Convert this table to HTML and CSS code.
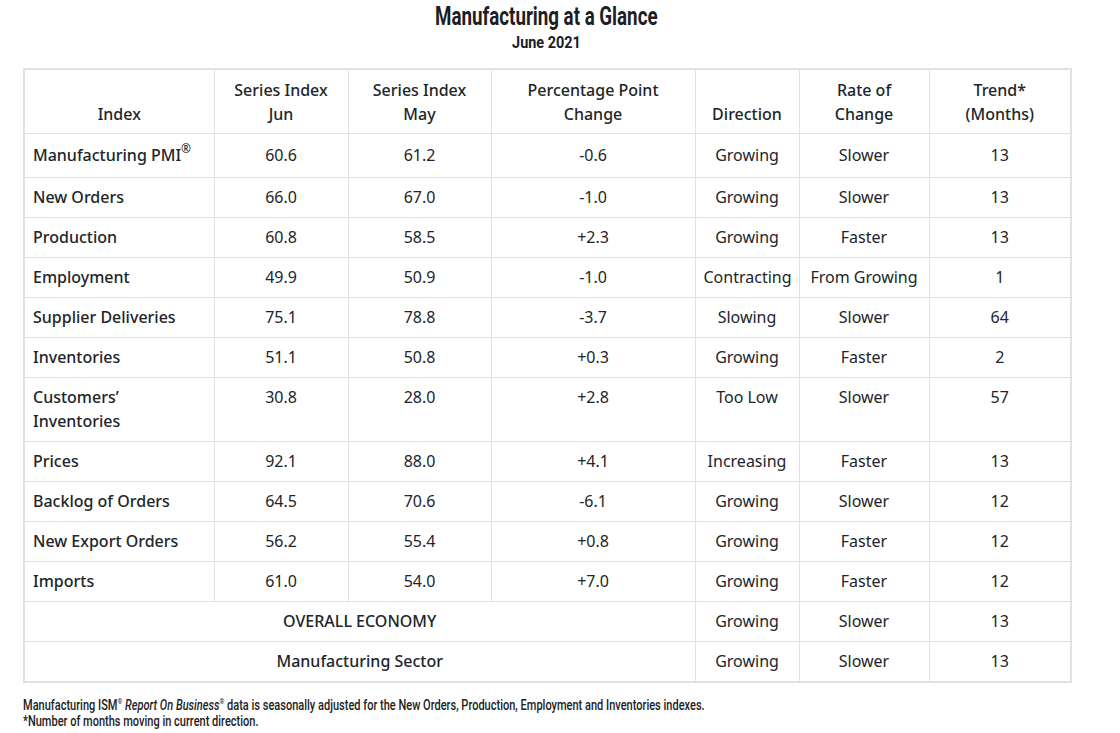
FILE: index.html
```html
<!DOCTYPE html>
<html lang="en">
<head>
<meta charset="utf-8">
<title>Manufacturing at a Glance</title>
<link rel="stylesheet" href="styles.css">
</head>
<body>
<div class="wrap">
  <header class="head">
    <h1 class="title"><span class="cond">Manufacturing at a Glance</span></h1>
    <h2 class="subtitle"><span class="cond">June 2021</span></h2>
  </header>
  <table class="glance">
    <colgroup>
      <col class="c1"><col class="c2"><col class="c3"><col class="c4"><col class="c5"><col class="c6"><col class="c7">
    </colgroup>
    <thead>
      <tr>
        <th>Index</th>
        <th>Series Index<br>Jun</th>
        <th>Series Index<br>May</th>
        <th>Percentage Point<br>Change</th>
        <th>Direction</th>
        <th>Rate of<br>Change</th>
        <th>Trend*<br>(Months)</th>
      </tr>
    </thead>
    <tbody>
      <tr class="tall"><td class="lbl">Manufacturing PMI<sup>®</sup></td><td>60.6</td><td>61.2</td><td>-0.6</td><td>Growing</td><td>Slower</td><td>13</td></tr>
      <tr><td class="lbl">New Orders</td><td>66.0</td><td>67.0</td><td>-1.0</td><td>Growing</td><td>Slower</td><td>13</td></tr>
      <tr><td class="lbl">Production</td><td>60.8</td><td>58.5</td><td>+2.3</td><td>Growing</td><td>Faster</td><td>13</td></tr>
      <tr><td class="lbl">Employment</td><td>49.9</td><td>50.9</td><td>-1.0</td><td>Contracting</td><td>From Growing</td><td>1</td></tr>
      <tr><td class="lbl">Supplier Deliveries</td><td>75.1</td><td>78.8</td><td>-3.7</td><td>Slowing</td><td>Slower</td><td>64</td></tr>
      <tr><td class="lbl">Inventories</td><td>51.1</td><td>50.8</td><td>+0.3</td><td>Growing</td><td>Faster</td><td>2</td></tr>
      <tr><td class="lbl">Customers’<br>Inventories</td><td>30.8</td><td>28.0</td><td>+2.8</td><td>Too Low</td><td>Slower</td><td>57</td></tr>
      <tr><td class="lbl">Prices</td><td>92.1</td><td>88.0</td><td>+4.1</td><td>Increasing</td><td>Faster</td><td>13</td></tr>
      <tr><td class="lbl">Backlog of Orders</td><td>64.5</td><td>70.6</td><td>-6.1</td><td>Growing</td><td>Slower</td><td>12</td></tr>
      <tr><td class="lbl">New Export Orders</td><td>56.2</td><td>55.4</td><td>+0.8</td><td>Growing</td><td>Faster</td><td>12</td></tr>
      <tr><td class="lbl">Imports</td><td>61.0</td><td>54.0</td><td>+7.0</td><td>Growing</td><td>Faster</td><td>12</td></tr>
      <tr><td class="sum" colspan="4">OVERALL ECONOMY</td><td>Growing</td><td>Slower</td><td>13</td></tr>
      <tr><td class="sum" colspan="4">Manufacturing Sector</td><td>Growing</td><td>Slower</td><td>13</td></tr>
    </tbody>
  </table>
  <div class="notes">
    <p class="note"><span class="cond">Manufacturing ISM<sup>®</sup> <em>Report On Business</em><sup>®</sup> data is seasonally adjusted for the New Orders, Production, Employment and Inventories indexes.</span></p>
    <p class="note"><span class="cond">*Number of months moving in current direction.</span></p>
  </div>
</div>
</body>
</html>
```
FILE: styles.css
```css
html, body {
  margin: 0;
  padding: 0;
  background: #ffffff;
}

body {
  font-family: "Noto Sans", "Open Sans", sans-serif;
  color: #212529;
}

.wrap {
  width: 1047px;
  margin-left: 23px;
}

.head {
  text-align: center;
}

.cond {
  display: inline-block;
  font-family: "Roboto", "Liberation Sans", sans-serif;
  white-space: nowrap;
}

.title {
  margin: 0;
  font-size: 25px;
  line-height: 30px;
  font-weight: 700;
  color: #1d1d24;
}

.title .cond {
  transform: scaleX(0.75);
  transform-origin: center;
}

.subtitle {
  margin: 0;
  font-size: 17px;
  line-height: 20px;
  font-weight: 700;
  color: #1d1d24;
}

.subtitle .cond {
  transform: scaleX(0.85);
  transform-origin: center;
}

.glance {
  margin-top: 16px;
  width: 1047px;
  border-collapse: collapse;
  border: 2px solid #dee2e6;
  table-layout: fixed;
  font-size: 16px;
  line-height: 24px;
}

.c1 { width: 190px; }
.c2 { width: 134px; }
.c3 { width: 143px; }
.c4 { width: 204px; }
.c5 { width: 104px; }
.c6 { width: 130px; }
.c7 { width: 142px; }

.glance th,
.glance td {
  border: 1px solid #dee2e6;
  padding: 7px 8px 8px;
  text-align: center;
  font-weight: 400;
}

.glance th {
  vertical-align: bottom;
  font-weight: 500;
  padding-top: 8px;
  padding-bottom: 7px;
}

.glance td {
  vertical-align: top;
}

.glance tr.tall td {
  padding-top: 9px;
  padding-bottom: 10px;
}

.glance td.lbl {
  text-align: left;
  font-weight: 500;
}

.glance td.sum {
  font-weight: 500;
}

.glance sup {
  font-size: 12px;
  line-height: 0;
  vertical-align: 8px;
}

.notes {
  margin-top: 14px;
}

.note {
  margin: 0;
  font-size: 14.5px;
  line-height: 14px;
  font-weight: 500;
  color: #1d1d24;
}

.note .cond {
  transform: scaleX(0.76);
  transform-origin: left center;
}

.note sup {
  font-size: 8px;
  line-height: 0;
  vertical-align: 6px;
}
```
